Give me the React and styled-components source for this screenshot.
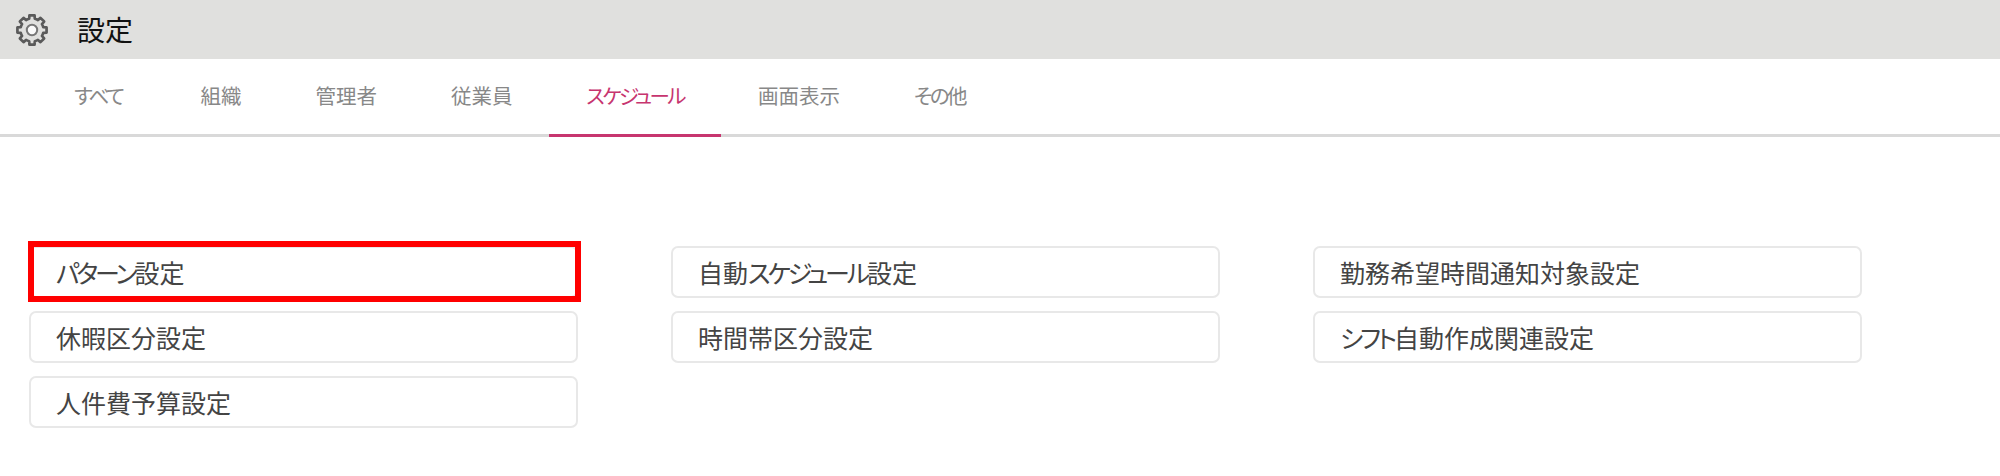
import React from 'react'
import styled, { createGlobalStyle } from 'styled-components'

const GlobalStyle = createGlobalStyle`
  html, body {
    margin: 0;
    padding: 0;
    background: #fff;
    font-family: "Noto Sans CJK JP", "Noto Sans", sans-serif;
    font-feature-settings: "palt";
  }
`

const tabs = ['すべて', '組織', '管理者', '従業員', 'スケジュール', '画面表示', 'その他']

const items = [
  { label: 'パターン設定', marked: true },
  { label: '自動スケジュール設定' },
  { label: '勤務希望時間通知対象設定' },
  { label: '休暇区分設定' },
  { label: '時間帯区分設定' },
  { label: 'シフト自動作成関連設定' },
  { label: '人件費予算設定' },
]

// outline of an 8 tooth cog, centred on 17,17
function cogPath() {
  const point = (r, deg) => {
    const a = (deg * Math.PI) / 180
    return `${(17 + r * Math.cos(a)).toFixed(2)} ${(17 + r * Math.sin(a)).toFixed(2)}`
  }
  let d = ''
  for (let i = 0; i < 8; i++) {
    const c = i * 45 - 90
    d += `${i ? 'L' : 'M'}${point(11.6, c - 14)} L${point(14.8, c - 10)} L${point(14.8, c + 10)} L${point(11.6, c + 14)} `
    d += `A11.6 11.6 0 0 1 ${point(11.6, c + 31)} `
  }
  return d + 'Z'
}

function Gear() {
  return (
    <GearIcon viewBox="0 0 34 34">
      <path d={cogPath()} />
      <circle cx="17" cy="17" r="5.2" />
    </GearIcon>
  )
}

// the kana of the original font run narrower than the kanji
function Label({ text }) {
  return text.split(/([ぁ-んァ-ヶー]+)/).map((part, i) =>
    i % 2 ? <Kana key={i}>{part}</Kana> : part
  )
}

function App() {
  return (
    <Page>
      <GlobalStyle />
      <Header>
        <Gear />
        <Title>設定</Title>
      </Header>
      <TabBar>
        {tabs.map(tab => (
          <Tab key={tab} $active={tab === 'スケジュール'}>
            <Label text={tab} />
          </Tab>
        ))}
      </TabBar>
      <Menu>
        {items.map(item => (
          <MenuItem key={item.label}>
            <Label text={item.label} />
            {item.marked && <Marker />}
          </MenuItem>
        ))}
      </Menu>
    </Page>
  )
}

export default App

const Page = styled.div`
  width: 2000px;
  height: 476px;
  overflow: hidden;
`

const Kana = styled.span`
  letter-spacing: -0.125em;
`

const Header = styled.div`
  display: flex;
  align-items: center;
  height: 59px;
  padding-left: 15px;
  background: #e0e0de;
`

const GearIcon = styled.svg`
  width: 34px;
  height: 34px;
  flex: none;
  path {
    fill: none;
    stroke: #5a5a5a;
    stroke-width: 2.7;
    stroke-linejoin: round;
  }
  circle {
    fill: #fafafa;
    stroke: #777;
    stroke-width: 2;
  }
`

const Title = styled.h1`
  margin: 0 0 0 28px;
  font-size: 28px;
  font-weight: 400;
  line-height: 59px;
  color: #111;
`

const TabBar = styled.div`
  display: flex;
  height: 78px;
  padding-left: 37px;
  border-bottom: 3px solid #d9d9d9;
  box-sizing: border-box;
`

const Tab = styled.div`
  display: flex;
  align-items: center;
  height: 78px;
  padding: 0 37px 4px;
  box-sizing: border-box;
  font-size: 20.5px;
  color: ${props => (props.$active ? '#c7356f' : '#888')};
  border-bottom: 3px solid ${props => (props.$active ? '#c7356f' : 'transparent')};
  &:first-child {
    padding-right: 41px;
  }
`

const Menu = styled.div`
  display: grid;
  grid-template-columns: repeat(3, 549px);
  grid-auto-rows: 52px;
  column-gap: 93px;
  row-gap: 13px;
  padding: 109px 0 0 29px;
`

const MenuItem = styled.div`
  position: relative;
  display: flex;
  align-items: center;
  padding-left: 25px;
  border: 2px solid #e8e8e8;
  border-radius: 7px;
  box-sizing: border-box;
  font-size: 25px;
  color: #444;
`

const Marker = styled.span`
  position: absolute;
  top: -7px;
  left: -3px;
  width: 553px;
  height: 61px;
  border: 6px solid #ff0000;
  box-sizing: border-box;
`
